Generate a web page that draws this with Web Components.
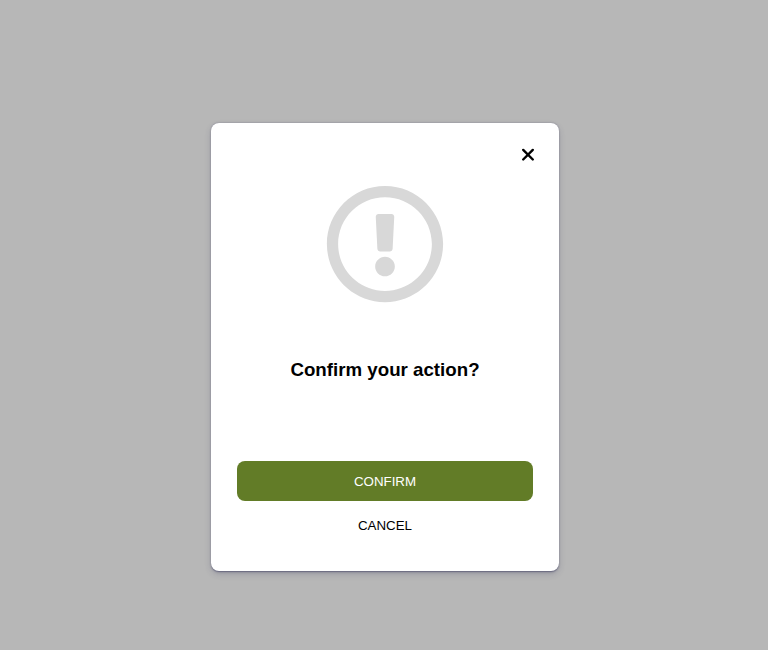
<!DOCTYPE html>
<html lang="en">
<head>
<meta charset="utf-8">
<title>Confirm</title>
<style>
  body { margin: 0; }
</style>
</head>
<body>

<modal-overlay>
  <confirm-dialog>
    <alert-icon slot="icon"></alert-icon>
    <span slot="title">Confirm your action?</span>
    <dialog-button slot="actions" variant="primary">CONFIRM</dialog-button>
    <dialog-button slot="actions">CANCEL</dialog-button>
  </confirm-dialog>
</modal-overlay>

<script>
//-----------------------------------------------
// dimmed backdrop, centers whatever is slotted
//-----------------------------------------------
class ModalOverlay extends HTMLElement {
  constructor() {
    super();
    this.attachShadow({ mode: 'open' }).innerHTML = `
      <style>
        :host {
          display: flex; align-items: center; justify-content: center;
          box-sizing: border-box;
          height: 100vh;
          padding: 44px 0 0 2px;
          background: #b7b7b7;
          font-family: "Liberation Sans", Arial, sans-serif;
          color: #000;
        }
      </style>
      <slot></slot>
    `;
  }
}

//-----------------------------------------------
// circled exclamation mark
//-----------------------------------------------
class AlertIcon extends HTMLElement {
  constructor() {
    super();
    this.attachShadow({ mode: 'open' }).innerHTML = `
      <style>
        :host { display: block; width: 120px; height: 120px; color: #d8d8d8; }
        svg { display: block; width: 100%; height: 100%; }
      </style>
      <svg viewBox="0 0 512 512" fill="currentColor" aria-hidden="true">
        <path d="M256 8C119.043 8 8 119.083 8 256c0 136.997 111.043 248 248 248s248-111.003 248-248C504 119.083 392.957 8 256 8zm0 448c-110.532 0-200-89.431-200-200 0-110.495 89.472-200 200-200 110.491 0 200 89.471 200 200 0 110.53-89.431 200-200 200zm42-104c0 23.159-18.841 42-42 42s-42-18.841-42-42 18.841-42 42-42 42 18.841 42 42zm-81.37-211.401l6.8 136c.319 6.387 5.591 11.401 11.985 11.401h41.17c6.394 0 11.666-5.014 11.985-11.401l6.8-136c.343-6.854-5.122-12.599-11.985-12.599h-54.77c-6.863 0-12.328 5.745-11.985 12.599z"/>
      </svg>
    `;
  }
}

//-----------------------------------------------
// full width button, variant="primary" is filled
//-----------------------------------------------
class DialogButton extends HTMLElement {
  constructor() {
    super();
    this.attachShadow({ mode: 'open' }).innerHTML = `
      <style>
        :host { display: block; }
        button {
          display: block; box-sizing: border-box;
          width: 100%; height: 40px;
          padding: 2px 0 0; border: 0; border-radius: 8px;
          background: transparent; color: inherit;
          font: 13.333px/38px "Liberation Sans", Arial, sans-serif;
          cursor: pointer;
        }
        :host([variant="primary"]) button { background: #627c27; color: #fff; }
      </style>
      <button type="button"><slot></slot></button>
    `;
  }
}

//-----------------------------------------------
// dialog card: icon, title, actions slots
//-----------------------------------------------
class ConfirmDialog extends HTMLElement {
  constructor() {
    super();
    const shadow = this.attachShadow({ mode: 'open' });
    shadow.innerHTML = `
      <style>
        :host {
          display: flex; flex-direction: column;
          box-sizing: border-box;
          width: 348px; height: 448px;
          padding: 24px 26px 26px;
          border-radius: 8px;
          background: #fff;
          box-shadow: rgba(50, 50, 93, .3) 0 3px 7px -1px,
                      rgba(30, 30, 70, .45) 0 .5px 1.5px;
        }
        .close {
          align-self: flex-end;
          width: 16px; height: 16px; margin-right: -3px;
          padding: 0; border: 0; background: none; color: #000;
          cursor: pointer;
        }
        .close svg { display: block; }
        .icon { align-self: center; margin-top: 21px; }
        h3 {
          margin: 55px 0 0;
          font-size: 18.72px; line-height: 22px; text-align: center;
        }
        .actions { display: grid; gap: 4px; margin-top: auto; }
      </style>
      <button class="close" type="button" aria-label="Close">
        <svg viewBox="0 0 16 16" width="16" height="16" fill="none" stroke="currentColor" stroke-width="2.4" stroke-linecap="round">
          <path d="M3.2 2.9l9.6 9.6M12.8 2.9l-9.6 9.6"/>
        </svg>
      </button>
      <div class="icon"><slot name="icon"></slot></div>
      <h3><slot name="title"></slot></h3>
      <div class="actions"><slot name="actions"></slot></div>
    `;
    shadow.querySelector('.close').addEventListener('click', () => {
      this.dispatchEvent(new CustomEvent('close', { bubbles: true }));
    });
  }
}

customElements.define('modal-overlay', ModalOverlay);
customElements.define('alert-icon', AlertIcon);
customElements.define('dialog-button', DialogButton);
customElements.define('confirm-dialog', ConfirmDialog);
</script>
</body>
</html>
